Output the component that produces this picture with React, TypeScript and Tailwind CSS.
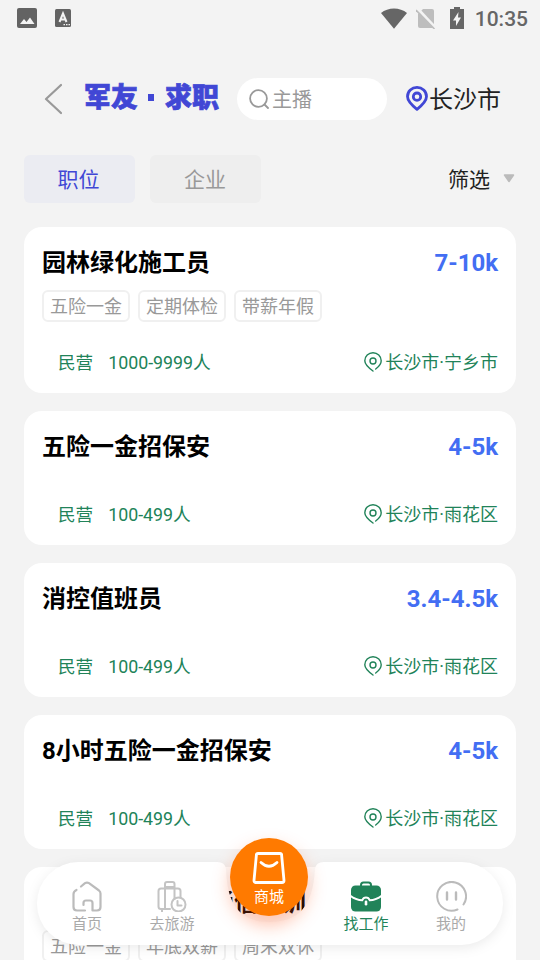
import type { ReactNode } from "react";

interface Job {
  title: string;
  salary: string;
  tags: string[];
  type: string;
  size: string;
  location: string;
}

const jobs: Job[] = [
  {
    title: "园林绿化施工员",
    salary: "7-10k",
    tags: ["五险一金", "定期体检", "带薪年假"],
    type: "民营",
    size: "1000-9999人",
    location: "长沙市·宁乡市",
  },
  { title: "五险一金招保安", salary: "4-5k", tags: [], type: "民营", size: "100-499人", location: "长沙市·雨花区" },
  { title: "消控值班员", salary: "3.4-4.5k", tags: [], type: "民营", size: "100-499人", location: "长沙市·雨花区" },
  { title: "8小时五险一金招保安", salary: "4-5k", tags: [], type: "民营", size: "100-499人", location: "长沙市·雨花区" },
  {
    title: "湖南移动公司招通信培训",
    salary: "",
    tags: ["五险一金", "年底双薪", "周末双休"],
    type: "民营",
    size: "100-499人",
    location: "长沙市·雨花区",
  },
];

function StatusBar() {
  return (
    <div className="flex h-9 shrink-0 items-center justify-between pr-3 pl-[17px] text-[#666]">
      <div className="flex items-center gap-[18px]">
        <svg width="20" height="20" viewBox="0 0 20 20">
          <rect width="20" height="20" rx="2" fill="#636363" />
          <path d="M3 16l4-5 2.500 3L13 9.500l4.500 6.500z" fill="#f3f3f3" />
        </svg>
        <svg width="16" height="18" viewBox="0 0 16 18">
          <rect width="16" height="18" rx="1.500" fill="#636363" />
          <path d="M4.500 13L8 4.500 11.500 13M5.800 10.400h4.400" stroke="#f3f3f3" strokeWidth="2" fill="none" />
          <path d="M8.500 15.700h1.500m1 0h1.500m1 0h1.500" stroke="#f3f3f3" strokeWidth="1.300" />
        </svg>
      </div>
      <div className="flex items-center">
        <svg width="26" height="21" viewBox="0 0 26 21" className="mr-[9px]">
          <path d="M0 5C7-1 19-1 26 5L13 20.800z" fill="#666" />
        </svg>
        <svg width="20" height="21" viewBox="0 0 20 21" className="mr-3.5">
          <path d="M7 1h9a2 2 0 012 2v15a2 2 0 01-2 2H4a2 2 0 01-2-2V6z" fill="#bdbdbd" />
          <path d="M1 0l19 20.500" stroke="#f3f3f3" strokeWidth="3" />
          <path d="M0 2l18.500 19" stroke="#bdbdbd" strokeWidth="1.600" />
        </svg>
        <svg width="14" height="22" viewBox="0 0 14 22" className="mr-[11px]">
          <path d="M4 0h6v2h4v20H0V2h4z" fill="#666" />
          <path d="M8.500 5L3 13.500h3V19l5-8.500H8z" fill="#f3f3f3" />
        </svg>
        <span className="pt-0.5 text-[21px] leading-6 font-medium">10:35</span>
      </div>
    </div>
  );
}

function Header() {
  return (
    <header className="mt-[42px] flex h-[42px] shrink-0 items-center">
      <svg width="18" height="32" viewBox="0 0 18 32" className="ml-11">
        <path d="M17 2L2 16l15 14" fill="none" stroke="#999" strokeWidth="2.200" strokeLinecap="round" strokeLinejoin="round" />
      </svg>
      <h1 className="ml-[22px] flex text-[27px] leading-[42px] font-black text-[#4147d5] [-webkit-text-stroke:0.700px_#4147d5]">
        <span className="-mt-[3px]">军友</span>
        <span className="mt-[14px] mr-[11px] ml-2.5 h-[7px] w-1.5 bg-[#4147d5]" />
        <span className="-mt-[3px]">求职</span>
      </h1>
      <div className="ml-[18px] flex h-[42px] w-[150px] items-center gap-[3px] rounded-full bg-white pl-3 text-xl text-[#999]">
        <svg width="20" height="20" viewBox="0 0 20 20" fill="none" stroke="#999" strokeWidth="1.800" strokeLinecap="round">
          <circle cx="9.500" cy="9.500" r="8.400" />
          <path d="M15.500 15.500l3.500 3.500" />
        </svg>
        <span className="pt-0.5">主播</span>
      </div>
      <div className="ml-[19px] flex items-center text-2xl text-[#222]">
        <svg width="22" height="25" viewBox="0 0 22 25" fill="none" stroke="#4147d5" strokeWidth="2.800" className="mr-px mb-0.5">
          <path d="M11 23.300C7.500 20.500 1.500 15.500 1.500 10.500a9.500 9.100 0 0119 0C20.500 15.500 14.500 20.500 11 23.300z" strokeLinejoin="round" />
          <circle cx="11" cy="10.700" r="3.700" />
        </svg>
        <span className="pt-0.5">长沙市</span>
      </div>
    </header>
  );
}

function FilterBar() {
  return (
    <div className="mt-[35px] flex h-12 shrink-0 items-center px-6 text-[21px]">
      <button className="h-12 w-[111px] rounded-md bg-[#ebecf2] pt-1 pr-0.5 text-[#4147d5]">职位</button>
      <button className="ml-[15px] h-12 w-[111px] rounded-md bg-[#eee] pt-1 pr-px text-[#999]">企业</button>
      <span className="ml-auto pt-1 text-[#222]">筛选</span>
      <svg width="12" height="9" viewBox="0 0 12 9" className="mr-px mb-0.5 ml-[13px]">
        <path d="M1.500 1h9L6 7.500z" fill="#bbb" stroke="#bbb" strokeWidth="1.500" strokeLinejoin="round" />
      </svg>
    </div>
  );
}

function JobCard({ job }: { job: Job }) {
  return (
    <article className="shrink-0 rounded-[18px] bg-white px-[18px] pt-[17px] pb-[13px]">
      <div className="flex h-9 items-center justify-between pt-0.5 text-2xl font-bold">
        <h2 className="text-black">{job.title}</h2>
        <span className="text-[#436ef3]">{job.salary}</span>
      </div>
      <div className="mt-2.5 flex gap-2">
        {job.tags.map((tag) => (
          <span
            key={tag}
            className="flex h-8 w-[88px] items-center justify-center rounded-md border-2 border-[#f0f0f0] pt-0.5 text-lg text-[#999]"
          >
            {tag}
          </span>
        ))}
      </div>
      <div className="mt-[22px] flex h-9 items-center pl-4 text-lg text-[#218359]">
        <span className="pt-[3px] text-[17.600px]">{job.type}</span>
        <span className="ml-[15px] pt-0.5 text-[17.800px]">{job.size}</span>
        <svg width="18" height="20" viewBox="0 0 18 20" fill="none" stroke="#218359" strokeWidth="1.400" strokeLinecap="round" className="mr-[3px] ml-auto">
          <path d="M9 19C5.500 16.500.8 13 .8 8.800a8.200 8.100 0 0116.400 0c0 3.400-2.700 6.200-5.500 8.200" />
          <circle cx="9" cy="9" r="3" />
        </svg>
        <span className="pt-0.5">{job.location}</span>
      </div>
    </article>
  );
}

function HomeIcon() {
  return (
    <svg width="30" height="31" viewBox="0 0 30 31" fill="none" stroke="#bbb" strokeWidth="2.200" strokeLinecap="round" strokeLinejoin="round">
      <path d="M9 5.500L13 2.200q2-1.300 4 0l10 7.300q1.500 1.200 1.500 3V26q0 3.500-3.500 3.500h-4.500V22q0-2.500-2.500-2.500h-4Q11.500 19.500 11.500 22v2" />
      <path d="M4.500 9Q1.500 10.500 1.500 13v13q0 3.500 3.500 3.500h8" />
    </svg>
  );
}

function TravelIcon() {
  return (
    <svg width="30" height="31" viewBox="0 0 30 31" fill="none" stroke="#c4c4c4" strokeWidth="2" strokeLinecap="round" strokeLinejoin="round">
      <path d="M13 28H4q-2.500 0-2.500-2.500V10Q1.500 7.500 4 7.500h17q2.500 0 2.500 2.500v6M5 28v2.500" />
      <path d="M8 28V3q0-2 2-2h5.500q2 0 2 2v15M8 6h9.500" />
      <circle cx="21.500" cy="23.500" r="7" />
      <path d="M20.500 20v4.500h4" />
    </svg>
  );
}

function BriefcaseIcon() {
  return (
    <svg width="32" height="31" viewBox="0 0 32 31">
      <path d="M11 6V4Q11 1.500 13.500 1.500h5q2.500 0 2.500 2.500v2" fill="none" stroke="#218359" strokeWidth="2" />
      <rect x="1" y="4.500" width="30" height="26" rx="4.500" fill="#218359" />
      <path d="M0 14.500Q6 19 12.200 19.300 13.300 16.500 16 16.500t3.800 2.800Q26 19 32 14.500" fill="none" stroke="#fff" strokeWidth="1.900" />
      <rect x="14.700" y="19.500" width="2.600" height="5" rx="1.300" fill="#fff" />
    </svg>
  );
}

function FaceIcon() {
  return (
    <svg width="31" height="31" viewBox="0 0 31 31" fill="none" stroke="#bbb" strokeWidth="2" strokeLinecap="round">
      <path d="M21.500 28.500A14.400 14.400 0 1127.500 23.500" />
      <path d="M11 11.500v7M20 11.500v7" strokeWidth="2.400" />
    </svg>
  );
}

function NavItem({ icon, label, active }: { icon: ReactNode; label: string; active?: boolean }) {
  return (
    <div className={active ? "flex w-[60px] flex-col items-center text-[#218359]" : "flex w-[60px] flex-col items-center text-[#aaa]"}>
      {icon}
      <span className="mt-0.5 text-[15px] leading-5">{label}</span>
    </div>
  );
}

function BottomNav() {
  return (
    <nav className="absolute top-[862px] left-[37px] h-[83px] w-[466px]">
      {/* white bar with a round cut-out under the shop button */}
      <div className="absolute inset-0 drop-shadow-[0_3px_6px_rgba(0,0,0,0.08)]">
        <div className="h-full rounded-full bg-white [clip-path:path('M0_0H180Q188_0_189_7C190_45_205_60_233_60S276_45_278_7Q279_0_287_0H466V83H0Z')]" />
      </div>
      <div className="relative flex h-full items-start pt-[19px] pl-5">
        <NavItem icon={<HomeIcon />} label="首页" />
        <div className="ml-[25px]">
          <NavItem icon={<TravelIcon />} label="去旅游" />
        </div>
        <div className="-mt-[43.500px] ml-7 flex size-[78px] flex-col items-center rounded-full bg-[#ff7a00] pt-[14px] text-white shadow-[0_9px_18px_rgba(255,80,20,0.350)]">
          <svg width="34" height="32" viewBox="0 0 34 32" fill="none" stroke="#fff" strokeWidth="2.800" strokeLinecap="round" strokeLinejoin="round">
            <path d="M6 1.500h22q1.500 0 1.600 1.500l2.400 25.500q0 2-2 2H4q-2 0-2-2L4.400 3Q4.500 1.500 6 1.500z" />
            <path d="M9 10.500q8 7.500 16 0" />
          </svg>
          <span className="mt-[3px] text-[15px] leading-5">商城</span>
        </div>
        <div className="ml-7">
          <NavItem icon={<BriefcaseIcon />} label="找工作" active />
        </div>
        <div className="ml-[25px]">
          <NavItem icon={<FaceIcon />} label="我的" />
        </div>
      </div>
    </nav>
  );
}

export default function App() {
  return (
    <div className="relative flex h-[960px] w-[540px] flex-col overflow-hidden bg-[#f3f3f3] font-[Roboto,'Noto_Sans_CJK_SC',sans-serif]">
      <StatusBar />
      <Header />
      <FilterBar />
      <main className="mt-6 flex flex-col gap-[18px] px-6">
        {jobs.map((job) => (
          <JobCard key={job.title} job={job} />
        ))}
      </main>
      <BottomNav />
    </div>
  );
}
